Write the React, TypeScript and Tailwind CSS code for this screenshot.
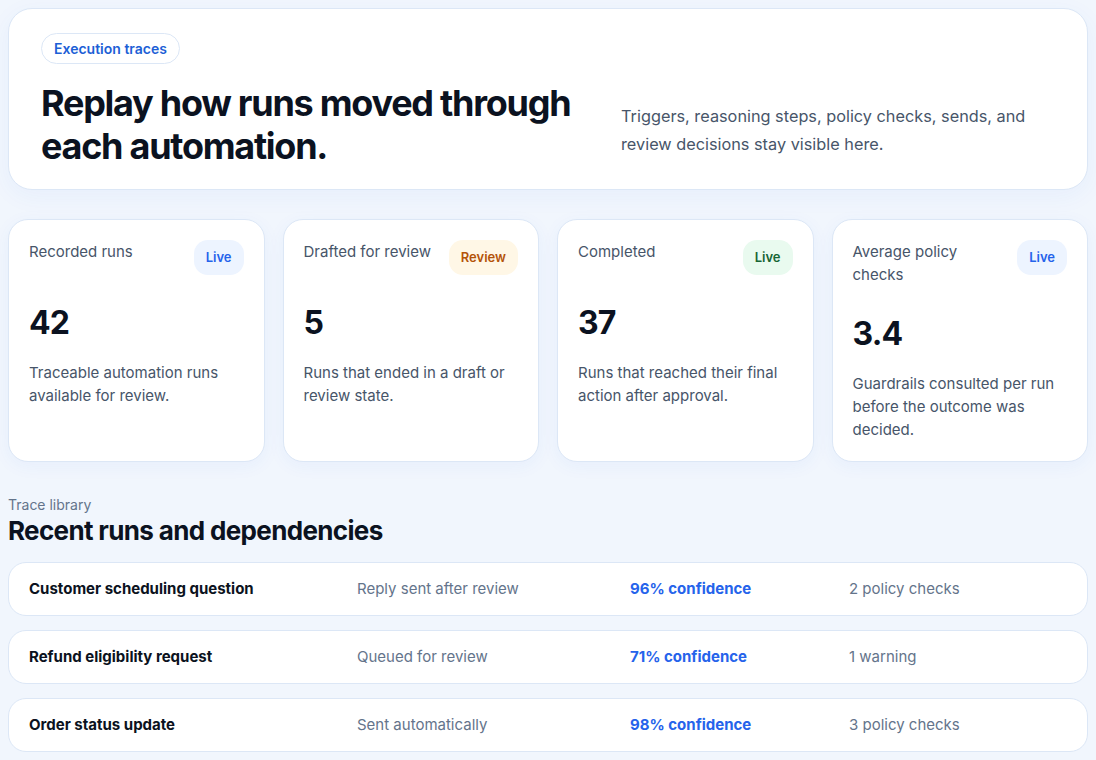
import React from "react";

const FONT = { fontFamily: "Inter, 'Noto Sans', sans-serif" };

type Stat = {
	label: string;
	value: string;
	note: string;
	badge: string;
	tone: "blue" | "amber" | "green";
};

const STATS: Stat[] = [
	{ label: "Recorded runs", value: "42", note: "Traceable automation runs available for review.", badge: "Live", tone: "blue" },
	{ label: "Drafted for review", value: "5", note: "Runs that ended in a draft or review state.", badge: "Review", tone: "amber" },
	{ label: "Completed", value: "37", note: "Runs that reached their final action after approval.", badge: "Live", tone: "green" },
	{ label: "Average policy checks", value: "3.4", note: "Guardrails consulted per run before the outcome was decided.", badge: "Live", tone: "blue" },
];

const RUNS = [
	{ title: "Customer scheduling question", status: "Reply sent after review", confidence: "96% confidence", checks: "2 policy checks" },
	{ title: "Refund eligibility request", status: "Queued for review", confidence: "71% confidence", checks: "1 warning" },
	{ title: "Order status update", status: "Sent automatically", confidence: "98% confidence", checks: "3 policy checks" },
];

const badgeTone = {
	blue: "bg-[#edf4ff] text-[#2563eb]",
	amber: "bg-[#fff7e6] text-[#b45309]",
	green: "bg-[#e9faef] text-[#166534]",
};

const StatCard = ({ stat }: { stat: Stat }) => (
	<div className="rounded-[20px] border border-[#dce7f6] bg-white p-5 shadow-[0_4px_18px_rgba(37,99,235,0.05)]">
		<div className="flex items-start justify-between gap-4">
			<p className="text-[15px] leading-[23px] text-[#475569]">{stat.label}</p>
			<span
				className={`flex h-[35px] shrink-0 items-center rounded-[14px] px-3 text-[13px] font-semibold ${badgeTone[stat.tone]}`}
			>
				{stat.badge}
			</span>
		</div>
		<p className="mt-7 text-[32px] font-bold leading-[40px] tracking-tight text-[#0b1220]">{stat.value}</p>
		<p className="mt-[18px] text-[15px] leading-[23px] text-[#475569]">{stat.note}</p>
	</div>
);

const App = () => {
	return (
		<div className="min-h-[760px] bg-[#f1f6fd] p-2 pb-6" style={FONT}>
			{/* hero */}
			<section className="rounded-[24px] border border-[#dce7f6] bg-white px-8 pb-[21px] pt-6 shadow-[0_6px_24px_rgba(37,99,235,0.05)]">
				<span className="inline-flex h-[31px] items-center rounded-full border border-[#dce7f6] px-3 text-[14px] font-semibold text-[#1d5fd6]">
					Execution traces
				</span>
				<div className="mt-[18px] grid grid-cols-[540px_1fr] items-end gap-10">
					<h1 className="text-[36px] font-bold leading-[43px] tracking-[-0.035em] text-[#0b1220]">
						Replay how runs moved through each automation.
					</h1>
					<p className="pb-[10px] text-[16.3px] leading-[28px] text-[#475569]">
						Triggers, reasoning steps, policy checks, sends, and review decisions stay visible here.
					</p>
				</div>
			</section>

			{/* stats */}
			<section className="mt-[29px] grid grid-cols-4 gap-[18px]">
				{STATS.map((stat) => (
					<StatCard key={stat.label} stat={stat} />
				))}
			</section>

			{/* trace library */}
			<section className="mt-[33px]">
				<p className="text-[14px] leading-[20px] text-[#64748b]">Trace library</p>
				<h2 className="text-[26px] font-bold leading-[32px] tracking-tight text-[#0b1220]">
					Recent runs and dependencies
				</h2>
				<ul className="mt-[15px] flex flex-col gap-[14px]">
					{RUNS.map((run) => (
						<li
							key={run.title}
							className="grid h-[54px] grid-cols-[328px_273px_219px_1fr] items-center rounded-[18px] border border-[#dce7f6] bg-white px-5 text-[15px]"
						>
							<span className="font-bold text-[#0b1220]">{run.title}</span>
							<span className="text-[#64748b]">{run.status}</span>
							<span className="font-bold text-[#2563eb]">{run.confidence}</span>
							<span className="text-[#64748b]">{run.checks}</span>
						</li>
					))}
				</ul>
			</section>
		</div>
	);
};

export default App;
